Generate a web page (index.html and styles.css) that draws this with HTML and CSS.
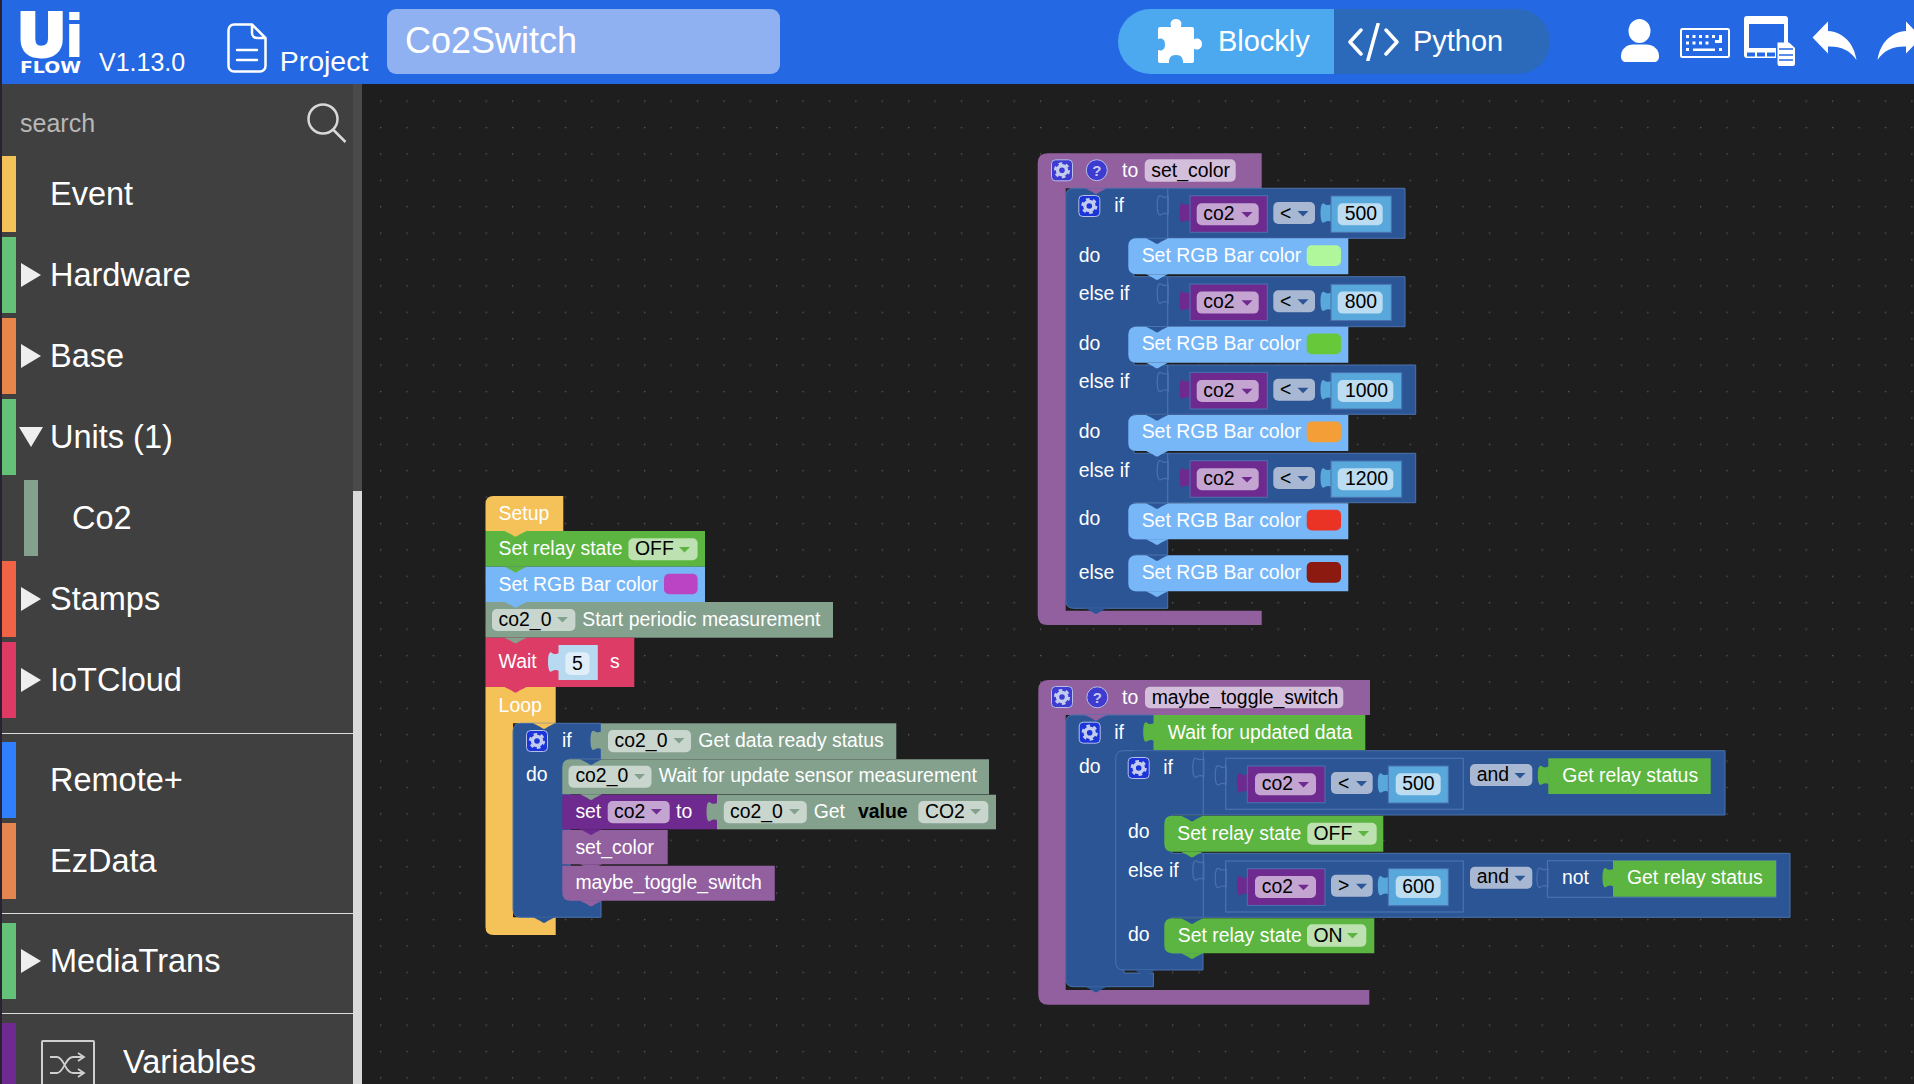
FILE: index.html
```html
<!DOCTYPE html>
<html lang="en">
<head>
    <meta charset="UTF-8">
    <title>UiFlow - Co2Switch</title>
    <link rel="stylesheet" href="styles.css">
</head>
<body>
<div class="app">
    <!-- top bar -->
    <header class="topbar">
        <svg class="logo" viewBox="0 0 62 84" width="62" height="84">
            <text class="logo-ui"><tspan class="logo-u" x="0" y="54.500">U</tspan><tspan class="logo-i" x="46" y="55.500">i</tspan></text>
            <text class="logo-flow" x="0" y="73" textLength="61" lengthAdjust="spacingAndGlyphs">FLOW</text>
        </svg>
        <span class="version">V1.13.0</span>
        <svg class="file-icon" viewBox="0 0 40 50" width="40" height="50">
            <path d="M7 1.5H25L38.5 15V43a5.5 5.5 0 0 1-5.5 5.5H7A5.5 5.5 0 0 1 1.5 43V7A5.5 5.5 0 0 1 7 1.5zM25 2V10a5 5 0 0 0 5 5H38M10 27H30M10 37H30"/>
        </svg>
        <span class="project">Project</span>
        <div class="project-name">Co2Switch</div>
        <div class="mode-switch">
            <div class="mode mode-blockly">
                <svg viewBox="0 0 45 45" width="45" height="45">
                    <path d="M3 8H14V7C13 5 13.5 0 19 0C24.5 0 25 5 24 7V8H35Q37 8 37 10V20C39 19 45 19 45 25C45 31 39 31 37 30V42Q37 44 35 44H26C26 41 26 36 19 36C12 36 12 41 12 44H3Q1 44 1 42V31C3 32 8 32 8 25.5C8 19 3 19 1 20V10Q1 8 3 8Z"/>
                </svg>
                <span>Blockly</span>
            </div>
            <div class="mode mode-python">
                <svg class="code-icon" viewBox="0 0 51 38" width="51" height="38">
                    <path d="M13 7L2 19L13 31M38 7L49 19L38 31M30 1L20 37"/>
                </svg>
                <span>Python</span>
            </div>
        </div>
        <svg class="tool tool-user" viewBox="0 0 38 43" width="38" height="43">
            <ellipse cx="18.5" cy="12" rx="11" ry="12"/>
            <path d="M0 37C0 30 6 25.5 12 25.5H25C32 25.5 38 30 38 37C38 41 36 43 33 43H5C2 43 0 41 0 37Z"/>
        </svg>
        <svg class="tool tool-keys" viewBox="0 0 50 30" width="50" height="30">
            <rect class="key-frame" x="1" y="1" width="48" height="28" rx="1.5"/>
            <path d="M6 7h3v3H6zM12.500 7h3v3h-3zM19 7h3v3h-3zM25.500 7h3v3h-3zM32 7h3v3h-3zM39 7h3v8h-7v-3h4zM6 13.500h3v3H6zM12.500 13.500h3v3h-3zM19 13.500h3v3h-3zM25.500 13.500h3v3h-3zM6 20h3v3H6zM13 20.500h22v2.500H13zM39 20h3v3h-3z"/>
        </svg>
        <svg class="tool tool-device" viewBox="0 0 52 50" width="52" height="50">
            <path fill-rule="evenodd" d="M3 0H41Q44 0 44 3V39Q44 42 41 42H3Q0 42 0 39V3Q0 0 3 0ZM5 8V32H40V8ZM3 36.500V40.500H11V36.500ZM13 36.500V40.500H21V36.500ZM23 36.500V40.500H31V36.500Z"/>
            <path class="doc-gap" d="M32 27H45L52 33V50H32Z"/>
            <path d="M33.500 26.500H45L51 32V48Q51 50 49 50H35.500Q33.500 50 33.500 48Z"/>
            <path class="doc-line" d="M35 33H49M35 39H49M35 44H49"/>
        </svg>
        <svg class="tool tool-undo" viewBox="0 0 45 39" width="45" height="39">
            <path d="M0.500 16.500L16 0.500V10C31 11 42 22 44.500 39C38 29 28 25 16 25.500V32.500Z"/>
        </svg>
        <svg class="tool tool-redo" viewBox="0 0 45 39" width="45" height="39">
            <path d="M44.500 16.500L29 0.500V10C14 11 3 22 0.500 39C7 29 17 25 29 25.500V32.500Z"/>
        </svg>
    </header>

    <div class="main">
        <!-- category list -->
        <aside class="sidebar">
            <div class="search">
                <span>search</span>
                <svg viewBox="0 0 40 40" width="40" height="40">
                    <circle cx="16" cy="16" r="14.500"/>
                    <path d="M26.500 27L38.500 39"/>
                </svg>
            </div>
            <div class="cat"><i class="bar c-event"></i><b class="tri"></b><span>Event</span></div>
            <div class="cat"><i class="bar c-hardware"></i><b class="tri tri-right"></b><span>Hardware</span></div>
            <div class="cat"><i class="bar c-base"></i><b class="tri tri-right"></b><span>Base</span></div>
            <div class="cat"><i class="bar c-hardware"></i><b class="tri tri-down"></b><span>Units (1)</span></div>
            <div class="cat cat-sub"><i class="bar c-co2"></i><span>Co2</span></div>
            <div class="cat"><i class="bar c-stamps"></i><b class="tri tri-right"></b><span>Stamps</span></div>
            <div class="cat"><i class="bar c-iot"></i><b class="tri tri-right"></b><span>IoTCloud</span></div>
            <hr class="sep sep-first">
            <div class="cat"><i class="bar c-remote"></i><b class="tri"></b><span>Remote+</span></div>
            <div class="cat"><i class="bar c-ezdata"></i><b class="tri"></b><span>EzData</span></div>
            <hr class="sep">
            <div class="cat"><i class="bar c-hardware"></i><b class="tri tri-right"></b><span>MediaTrans</span></div>
            <hr class="sep">
            <div class="cat cat-var">
                <i class="bar c-vars"></i>
                <div class="var-icon">
                    <svg viewBox="0 0 36 26" width="36" height="26">
                        <path d="M0 5H7C14 5 15 21 23 21H33M0 21H7C14 21 15 5 23 5H33M28 1L34 5L28 9M28 17L34 21L28 25"/>
                    </svg>
                </div>
                <span>Variables</span>
            </div>
        </aside>
        <div class="scrollbar"><div class="scroll-thumb"></div></div>

        <!-- blockly workspace, coordinates are page pixels -->
        <svg class="workspace" viewBox="362 84 1552 1000" width="1552" height="1000">
            <defs>
                <pattern id="dots" x="380" y="100.500" width="26.400" height="26.400" patternUnits="userSpaceOnUse">
                    <rect width="1.300" height="1.300" fill="#5a5a5a"/>
                </pattern>
                <path id="notch" d="M0 0L7 3.500L10 5.500H12L15 3.500L22 0Z"/>
                <path id="tab" d="M0.500 8C-3 10-5 9-7 7.500C-9.500 6.500-10.500 11-10.500 17C-10.500 23-9.500 27.500-7 26.500C-5 25-3 24 0.500 26Z"/>
                <path id="arr" d="M0 0H11L5.500 5.500Z"/>
                <path id="rgb" d="M1136.300 0H1348.300V36H1136.300Q1128.300 36 1128.300 28V8Q1128.300 0 1136.300 0Z"/>
                <g id="gear">
                    <rect x="0.500" y="0.500" width="21" height="21" rx="4" class="gear-box"/>
                    <circle cx="11" cy="11" r="4.500" class="gear-ring"/>
                    <circle cx="11" cy="11" r="6.800" class="gear-teeth"/>
                </g>
            </defs>
            <rect x="362" y="84" width="1552" height="1000" fill="url(#dots)"/>

            <!-- setup / loop stack -->
            <path class="yellow" d="M485.500 504Q485.500 496 493.500 496H563.300V531H485.500Z"/>
            <text class="t" x="498.600" y="520">Setup</text>

            <rect class="green" x="485.500" y="531" width="219.500" height="35.700"/>
            <text class="t" x="498.600" y="555">Set relay state</text>
            <rect class="f-green" x="628.400" y="538.300" width="69.200" height="22" rx="5"/>
            <text class="k" x="635" y="555">OFF</text>
            <use href="#arr" class="a-green" x="679" y="547"/>

            <rect class="sky" x="485.500" y="566.700" width="219.500" height="35.300"/>
            <text class="t" x="498.600" y="590.700">Set RGB Bar color</text>
            <rect class="sw-magenta" x="664" y="573.700" width="33.600" height="20.600" rx="5"/>

            <rect class="sage" x="485.500" y="602" width="347.500" height="35.700"/>
            <rect class="f-sage" x="492" y="609" width="83.400" height="22" rx="5"/>
            <text class="k" x="498.600" y="626">co2_0</text>
            <use href="#arr" class="a-sage" x="557" y="617"/>
            <text class="t" x="582.300" y="626">Start periodic measurement</text>

            <rect class="pink" x="485.500" y="637.700" width="148.800" height="49.300"/>
            <text class="t" x="498.600" y="668.300">Wait</text>
            <use href="#tab" class="num-shadow" x="558.500" y="645"/>
            <rect class="num-shadow" x="558.500" y="645" width="39.300" height="35"/>
            <rect class="f-num-shadow" x="565.400" y="652.300" width="24.100" height="22.700" rx="5"/>
            <text class="k" x="572" y="669.500">5</text>
            <text class="t" x="610" y="668.300">s</text>

            <path class="yellow" d="M485.500 687H555.700V723.300H513V917.300H555.700V935H493.500Q485.500 935 485.500 927Z"/>
            <text class="t" x="498.600" y="712">Loop</text>

            <path class="blue edge" d="M513 731.300Q513 723.300 521 723.300H601V759H570V900H601V917.300H521Q513 917.300 513 909.300Z"/>
            <use href="#gear" class="gear-if" x="526" y="730"/>
            <text class="t" x="562" y="746.700">if</text>
            <text class="t" x="526" y="781">do</text>

            <use href="#tab" class="sage" x="601" y="723.300"/>
            <rect class="sage" x="601" y="723.300" width="295.300" height="35.700"/>
            <rect class="f-sage" x="608" y="730" width="83" height="22.300" rx="5"/>
            <text class="k" x="614.600" y="746.700">co2_0</text>
            <use href="#arr" class="a-sage" x="673.500" y="738"/>
            <text class="t" x="698.300" y="746.700">Get data ready status</text>

            <path class="sage" d="M570.300 759.300H989V794.300H562.300V767.300Q562.300 759.300 570.300 759.300Z"/>
            <rect class="f-sage" x="568.500" y="765.700" width="83" height="22" rx="5"/>
            <text class="k" x="575.400" y="782.300">co2_0</text>
            <use href="#arr" class="a-sage" x="634" y="774"/>
            <text class="t" x="658.700" y="782.300">Wait for update sensor measurement</text>

            <rect class="var" x="562.300" y="794.700" width="154.700" height="34.600"/>
            <text class="t" x="575.400" y="817.700">set</text>
            <rect class="f-var" x="607.700" y="801" width="62" height="22.300" rx="5"/>
            <text class="k" x="614" y="817.700">co2</text>
            <use href="#arr" class="a-var" x="651" y="809"/>
            <text class="t" x="676" y="817.700">to</text>
            <use href="#tab" class="sage" x="717" y="794.700"/>
            <rect class="sage" x="717" y="794.700" width="279" height="34.600"/>
            <rect class="f-sage" x="723.800" y="801" width="83" height="22.300" rx="5"/>
            <text class="k" x="730" y="817.700">co2_0</text>
            <use href="#arr" class="a-sage" x="789" y="809"/>
            <text class="t" x="813.700" y="817.700">Get</text>
            <text class="k kb" x="858" y="817.700">value</text>
            <rect class="f-sage" x="918.300" y="801" width="70" height="22.300" rx="5"/>
            <text class="k" x="925" y="817.700">CO2</text>
            <use href="#arr" class="a-sage" x="970" y="809"/>

            <rect class="proc" x="562.300" y="830" width="105.400" height="34.300"/>
            <text class="t" x="575.400" y="854">set_color</text>
            <path class="proc" d="M562.300 865.700H774.800V900.700H570.300Q562.300 900.700 562.300 892.700Z"/>
            <text class="t" x="575.400" y="889.300">maybe_toggle_switch</text>

            <use href="#notch" class="yellow" x="504.500" y="531"/>
            <use href="#notch" class="green" x="504.500" y="566.700"/>
            <use href="#notch" class="sky" x="504.500" y="602"/>
            <use href="#notch" class="sage" x="504.500" y="637.700"/>
            <use href="#notch" class="pink" x="504.500" y="687"/>
            <use href="#notch" class="yellow" x="533" y="723.300"/>
            <use href="#notch" class="blue" x="533" y="917.300"/>
            <use href="#notch" class="blue" x="580" y="759.300"/>
            <use href="#notch" class="sage" x="580" y="794.300"/>
            <use href="#notch" class="var" x="580" y="829.300"/>
            <use href="#notch" class="proc" x="580" y="864.300"/>
            <use href="#notch" class="proc" x="580" y="900.700"/>

            <!-- to set_color -->
            <path class="proc" d="M1037.700 163.300Q1037.700 153.300 1047.700 153.300H1261.700V188.300H1065.700V610.700H1261.700V625H1047.700Q1037.700 625 1037.700 615Z"/>
            <use href="#gear" class="gear-fn" x="1051" y="159.300"/>
            <circle class="help" cx="1096.800" cy="170.200" r="10.500"/>
            <text class="help-q" x="1096.800" y="176">?</text>
            <text class="t" x="1122" y="176.700">to</text>
            <rect class="f-proc" x="1144.700" y="159.300" width="91" height="22.400" rx="5"/>
            <text class="k" x="1151.300" y="176.700">set_color</text>

            <path class="blue edge" d="M1065.700 196.300Q1065.700 188.300 1073.700 188.300H1405V238.300H1134V276.700H1405V326.700H1134V365H1415.700V414.300H1134V453.300H1415.700V502.700H1134V539H1167.700V555H1134V591H1167.700V608.300H1073.700Q1065.700 608.300 1065.700 600.300Z"/>
            <path class="edge-line" d="M1167.700 188.300V238.300M1167.700 276.700V326.700M1167.700 365V414.300M1167.700 453.300V502.700"/>
            <use href="#gear" class="gear-if" x="1078.300" y="195"/>
            <text class="t" x="1114.300" y="212">if</text>
            <text class="t" x="1078.700" y="261.700">do</text>
            <text class="t" x="1078.700" y="300">else if</text>
            <text class="t" x="1078.700" y="350">do</text>
            <text class="t" x="1078.700" y="388.300">else if</text>
            <text class="t" x="1078.700" y="437.700">do</text>
            <text class="t" x="1078.700" y="476.700">else if</text>
            <text class="t" x="1078.700" y="525.300">do</text>
            <text class="t" x="1078.700" y="578.700">else</text>

            <use href="#tab" class="sock" x="1167.700" y="188.300"/>
            <use href="#tab" class="var" x="1190" y="195.700"/>
            <rect class="var edge" x="1190" y="195.700" width="77.300" height="36.600"/>
            <rect class="f-var" x="1196.700" y="203.300" width="62" height="22" rx="5"/>
            <text class="k" x="1203.300" y="220">co2</text>
            <use href="#arr" class="a-var" x="1241.500" y="212"/>
            <rect class="f-op" x="1273.300" y="202" width="41.700" height="22" rx="5"/>
            <text class="k" x="1280" y="219.500">&lt;</text>
            <use href="#arr" class="a-op" x="1297.500" y="211"/>
            <use href="#tab" class="num" x="1331" y="196"/>
            <rect class="num edge" x="1331" y="196" width="60.300" height="36.300"/>
            <rect class="f-num" x="1337.700" y="203.300" width="45" height="22" rx="5"/>
            <text class="k" x="1344.700" y="220">500</text>

            <g transform="translate(0 88.300)">
                <use href="#tab" class="sock" x="1167.700" y="188.300"/>
                <use href="#tab" class="var" x="1190" y="195.700"/>
                <rect class="var edge" x="1190" y="195.700" width="77.300" height="36.600"/>
                <rect class="f-var" x="1196.700" y="203.300" width="62" height="22" rx="5"/>
                <text class="k" x="1203.300" y="220">co2</text>
                <use href="#arr" class="a-var" x="1241.500" y="212"/>
                <rect class="f-op" x="1273.300" y="202" width="41.700" height="22" rx="5"/>
                <text class="k" x="1280" y="219.500">&lt;</text>
                <use href="#arr" class="a-op" x="1297.500" y="211"/>
                <use href="#tab" class="num" x="1331" y="196"/>
                <rect class="num edge" x="1331" y="196" width="60.300" height="36.300"/>
                <rect class="f-num" x="1337.700" y="203.300" width="45" height="22" rx="5"/>
                <text class="k" x="1344.700" y="220">800</text>
            </g>
            <g transform="translate(0 176.700)">
                <use href="#tab" class="sock" x="1167.700" y="188.300"/>
                <use href="#tab" class="var" x="1190" y="195.700"/>
                <rect class="var edge" x="1190" y="195.700" width="77.300" height="36.600"/>
                <rect class="f-var" x="1196.700" y="203.300" width="62" height="22" rx="5"/>
                <text class="k" x="1203.300" y="220">co2</text>
                <use href="#arr" class="a-var" x="1241.500" y="212"/>
                <rect class="f-op" x="1273.300" y="202" width="41.700" height="22" rx="5"/>
                <text class="k" x="1280" y="219.500">&lt;</text>
                <use href="#arr" class="a-op" x="1297.500" y="211"/>
                <use href="#tab" class="num" x="1331" y="196"/>
                <rect class="num edge" x="1331" y="196" width="70.700" height="36.300"/>
                <rect class="f-num" x="1337.700" y="203.300" width="55.600" height="22" rx="5"/>
                <text class="k" x="1345" y="220">1000</text>
            </g>
            <g transform="translate(0 265)">
                <use href="#tab" class="sock" x="1167.700" y="188.300"/>
                <use href="#tab" class="var" x="1190" y="195.700"/>
                <rect class="var edge" x="1190" y="195.700" width="77.300" height="36.600"/>
                <rect class="f-var" x="1196.700" y="203.300" width="62" height="22" rx="5"/>
                <text class="k" x="1203.300" y="220">co2</text>
                <use href="#arr" class="a-var" x="1241.500" y="212"/>
                <rect class="f-op" x="1273.300" y="202" width="41.700" height="22" rx="5"/>
                <text class="k" x="1280" y="219.500">&lt;</text>
                <use href="#arr" class="a-op" x="1297.500" y="211"/>
                <use href="#tab" class="num" x="1331" y="196"/>
                <rect class="num edge" x="1331" y="196" width="70.700" height="36.300"/>
                <rect class="f-num" x="1337.700" y="203.300" width="55.600" height="22" rx="5"/>
                <text class="k" x="1345" y="220">1200</text>
            </g>

            <use href="#rgb" class="sky" y="238.300"/>
            <text class="t" x="1141.700" y="261.700">Set RGB Bar color</text>
            <rect class="sw-mint" x="1306.700" y="245.300" width="34.300" height="20.700" rx="5"/>
            <use href="#rgb" class="sky" y="326.700"/>
            <text class="t" x="1141.700" y="350">Set RGB Bar color</text>
            <rect class="sw-green" x="1306.700" y="333.500" width="34.300" height="20.700" rx="5"/>
            <use href="#rgb" class="sky" y="415"/>
            <text class="t" x="1141.700" y="438.300">Set RGB Bar color</text>
            <rect class="sw-orange" x="1306.700" y="421.500" width="34.300" height="20.700" rx="5"/>
            <use href="#rgb" class="sky" y="503.300"/>
            <text class="t" x="1141.700" y="526.700">Set RGB Bar color</text>
            <rect class="sw-red" x="1306.700" y="509.800" width="34.300" height="20.700" rx="5"/>
            <use href="#rgb" class="sky" y="555.300"/>
            <text class="t" x="1141.700" y="578.700">Set RGB Bar color</text>
            <rect class="sw-maroon" x="1306.700" y="562" width="34.300" height="20.700" rx="5"/>

            <use href="#notch" class="proc" x="1085" y="188.300"/>
            <use href="#notch" class="blue" x="1085" y="608.300"/>
            <use href="#notch" class="blue" x="1146" y="238.300"/>
            <use href="#notch" class="sky" x="1146" y="274.300"/>
            <use href="#notch" class="blue" x="1146" y="326.700"/>
            <use href="#notch" class="sky" x="1146" y="362.700"/>
            <use href="#notch" class="blue" x="1146" y="415"/>
            <use href="#notch" class="sky" x="1146" y="451"/>
            <use href="#notch" class="blue" x="1146" y="503.300"/>
            <use href="#notch" class="sky" x="1146" y="539.300"/>
            <use href="#notch" class="blue" x="1146" y="555.300"/>
            <use href="#notch" class="sky" x="1146" y="591.300"/>

            <!-- to maybe_toggle_switch -->
            <path class="proc" d="M1038.300 690Q1038.300 680 1048.300 680H1370V715H1065.700V990H1369.300V1004.700H1048.300Q1038.300 1004.700 1038.300 994.700Z"/>
            <use href="#gear" class="gear-fn" x="1051" y="686"/>
            <circle class="help" cx="1097.300" cy="697.300" r="10.500"/>
            <text class="help-q" x="1097.300" y="703">?</text>
            <text class="t" x="1122" y="704.300">to</text>
            <rect class="f-proc" x="1145" y="686.700" width="198.300" height="21.600" rx="5"/>
            <text class="k" x="1151.700" y="704.300">maybe_toggle_switch</text>

            <path class="blue edge" d="M1065.700 723Q1065.700 715 1073.700 715H1153.700V750.700H1124V973H1153.400V986.700H1073.700Q1065.700 986.700 1065.700 978.700Z"/>
            <use href="#gear" class="gear-if" x="1078.700" y="721.700"/>
            <text class="t" x="1114.300" y="739.300">if</text>
            <text class="t" x="1079" y="772.700">do</text>

            <use href="#tab" class="green" x="1153.700" y="715"/>
            <rect class="green" x="1153.700" y="715" width="211.600" height="35"/>
            <text class="t" x="1167.700" y="739.300">Wait for updated data</text>

            <path class="blue edge" d="M1115.700 758.700Q1115.700 750.700 1123.700 750.700H1725V815H1172V853.300H1790V917.300H1172V953.300H1203V970H1123.700Q1115.700 970 1115.700 962Z"/>
            <path class="edge-line" d="M1203.300 750.700V815M1203.300 853.300V917.300"/>
            <use href="#gear" class="gear-if" x="1127.700" y="757"/>
            <text class="t" x="1163.300" y="774.300">if</text>
            <text class="t" x="1128" y="838">do</text>
            <text class="t" x="1128" y="877">else if</text>
            <text class="t" x="1128" y="941.300">do</text>

            <use href="#tab" class="sock" x="1203.300" y="750.700"/>
            <use href="#tab" class="sock" x="1225.700" y="758.300"/>
            <rect class="outline" x="1225.700" y="758.300" width="237.600" height="51"/>
            <use href="#tab" class="var" x="1247.300" y="766"/>
            <rect class="var edge" x="1247.300" y="766" width="77.700" height="36.700"/>
            <rect class="f-var" x="1255" y="773.300" width="61" height="22" rx="5"/>
            <text class="k" x="1261.700" y="790">co2</text>
            <use href="#arr" class="a-var" x="1298" y="782"/>
            <rect class="f-op" x="1331" y="772" width="41.700" height="22" rx="5"/>
            <text class="k" x="1338" y="789.500">&lt;</text>
            <use href="#arr" class="a-op" x="1356" y="781"/>
            <use href="#tab" class="num" x="1388.300" y="766"/>
            <rect class="num edge" x="1388.300" y="766" width="60" height="37"/>
            <rect class="f-num" x="1395.700" y="773.300" width="45" height="22" rx="5"/>
            <text class="k" x="1402.300" y="790">500</text>
            <rect class="f-op" x="1470" y="764" width="62.300" height="22" rx="5"/>
            <text class="k" x="1476.700" y="780.700">and</text>
            <use href="#arr" class="a-op" x="1514.500" y="773"/>
            <use href="#tab" class="green" x="1548.300" y="758.300"/>
            <rect class="green" x="1548.300" y="758.300" width="162.400" height="35.700"/>
            <text class="t" x="1562.300" y="781.700">Get relay status</text>

            <g transform="translate(0 102.700)">
                <use href="#tab" class="sock" x="1203.300" y="750.700"/>
                <use href="#tab" class="sock" x="1225.700" y="758.300"/>
                <rect class="outline" x="1225.700" y="758.300" width="237.600" height="51"/>
                <use href="#tab" class="var" x="1247.300" y="766"/>
                <rect class="var edge" x="1247.300" y="766" width="77.700" height="36.700"/>
                <rect class="f-var" x="1255" y="773.300" width="61" height="22" rx="5"/>
                <text class="k" x="1261.700" y="790">co2</text>
                <use href="#arr" class="a-var" x="1298" y="782"/>
                <rect class="f-op" x="1331" y="772" width="41.700" height="22" rx="5"/>
                <text class="k" x="1338" y="789.500">&gt;</text>
                <use href="#arr" class="a-op" x="1356" y="781"/>
                <use href="#tab" class="num" x="1388.300" y="766"/>
                <rect class="num edge" x="1388.300" y="766" width="60" height="37"/>
                <rect class="f-num" x="1395.700" y="773.300" width="45" height="22" rx="5"/>
                <text class="k" x="1402.300" y="790">600</text>
                <rect class="f-op" x="1470" y="764" width="62.300" height="22" rx="5"/>
                <text class="k" x="1476.700" y="780.700">and</text>
                <use href="#arr" class="a-op" x="1514.500" y="773"/>
            </g>
            <use href="#tab" class="sock" x="1547.400" y="860.700"/>
            <rect class="outline" x="1547.400" y="860.700" width="228.600" height="36.600"/>
            <text class="t" x="1562" y="884">not</text>
            <use href="#tab" class="green" x="1613" y="860.700"/>
            <rect class="green" x="1613" y="860.700" width="163" height="36"/>
            <text class="t" x="1627" y="884">Get relay status</text>

            <path class="green" d="M1172.300 815.700H1383.300V851.700H1172.300Q1164.300 851.700 1164.300 843.700V823.700Q1164.300 815.700 1172.300 815.700Z"/>
            <text class="t" x="1177.300" y="839.700">Set relay state</text>
            <rect class="f-green" x="1307.300" y="822.700" width="69.400" height="22" rx="5"/>
            <text class="k" x="1313.500" y="839.700">OFF</text>
            <use href="#arr" class="a-green" x="1358" y="831"/>
            <path class="green" d="M1172.300 918.300H1374.300V953.300H1172.300Q1164.300 953.300 1164.300 945.300V926.300Q1164.300 918.300 1172.300 918.300Z"/>
            <text class="t" x="1177.800" y="941.700">Set relay state</text>
            <rect class="f-green" x="1307" y="924.300" width="59.300" height="22.400" rx="5"/>
            <text class="k" x="1313.500" y="941.700">ON</text>
            <use href="#arr" class="a-green" x="1347" y="933"/>

            <use href="#notch" class="proc" x="1085" y="715"/>
            <use href="#notch" class="blue" x="1085" y="986.700"/>
            <use href="#notch" class="blue" x="1133" y="750.700"/>
            <use href="#notch" class="blue" x="1134" y="970"/>
            <use href="#notch" class="blue" x="1181" y="815.700"/>
            <use href="#notch" class="green" x="1181" y="851.700"/>
            <use href="#notch" class="blue" x="1181" y="918.300"/>
            <use href="#notch" class="green" x="1181" y="953.300"/>
        </svg>
    </div>
</div>
</body>
</html>
```

FILE: styles.css
```css
html, body {
    margin: 0;
    padding: 0;
    overflow: hidden;
    background: #2a2233;
    width: 1914px;
    height: 1084px;
    font-family: "Liberation Sans", Arial, sans-serif;
}

.app {
    margin-left: 2px;
    height: 1084px;
    display: flex;
    flex-direction: column;
}

/* top bar */
.topbar {
    height: 84px;
    flex: none;
    display: flex;
    align-items: flex-start;
    background: #2468e3;
    color: white;
    overflow: hidden;
}

.logo {
    margin: 0 0 0 18px;
    flex: none;
}

.logo-ui {
    font: bold 60px "Liberation Sans", Arial, sans-serif;
    fill: white;
    stroke: white;
}

.logo-u { stroke-width: 6px; }
.logo-i { stroke-width: 2px; }

.logo-flow {
    font: bold 16px "DejaVu Sans", sans-serif;
    fill: white;
}

.version {
    margin: 47px 0 0 17px;
    font-size: 25px;
    line-height: 30px;
    white-space: nowrap;
}

.file-icon {
    margin: 23px 0 0 42px;
    flex: none;
}

.file-icon path {
    fill: none;
    stroke: white;
    stroke-width: 2.5px;
    stroke-linejoin: round;
    stroke-linecap: round;
}

.project {
    margin: 43px 0 0 12.500px;
    font-size: 28.5px;
    line-height: 36px;
}

.project-name {
    margin: 9px 0 0 18.500px;
    width: 375px;
    height: 65px;
    padding-left: 18px;
    border-radius: 9px;
    background: #8fb1f1;
    font-size: 36px;
    line-height: 63px;
    flex: none;
}

.mode-switch {
    margin: 9px 0 0 338px;
    width: 432px;
    height: 65px;
    display: flex;
    border-radius: 33px;
    overflow: hidden;
    flex: none;
}

.mode {
    width: 216px;
    box-sizing: border-box;
    display: flex;
    align-items: center;
    font-size: 29px;
}

.mode svg {
    flex: none;
}

.mode svg path {
    fill: white;
}

.mode-blockly {
    background: #4ca9f0;
    padding-left: 39px;
    gap: 16px;
}

.mode-python {
    background: #2b69bb;
    padding-left: 14px;
    gap: 14px;
}

.mode svg.code-icon path {
    fill: none;
    stroke: white;
    stroke-width: 3.5px;
    stroke-linecap: round;
    stroke-linejoin: round;
}

.tool {
    flex: none;
    fill: white;
}

.tool-user { margin: 19px 0 0 71px; }
.tool-keys { margin: 28px 0 0 21px; }
.tool-device { margin: 16px 0 0 14px; }
.tool-undo { margin: 21px 0 0 16px; }
.tool-redo { margin: 21px 0 0 20px; }

.key-frame {
    fill: none;
    stroke: white;
    stroke-width: 2px;
}

.doc-gap { fill: #2468e3; }

.doc-line {
    fill: none;
    stroke: #2468e3;
    stroke-width: 1.5px;
}

.main {
    flex: 1;
    display: flex;
    min-height: 0;
}

/* categories */
.sidebar {
    width: 351px;
    flex: none;
    background: #404040;
    color: white;
    font-size: 32.5px;
    overflow: hidden;
}

.search {
    height: 72px;
    box-sizing: border-box;
    display: flex;
    align-items: center;
    justify-content: space-between;
    padding: 6px 6px 0 18px;
    color: #b8b8b8;
    font-size: 25px;
}

.search svg {
    fill: none;
    stroke: #d8d8d8;
    stroke-width: 2.5px;
}

.cat {
    height: 76px;
    margin-bottom: 5px;
    display: flex;
    align-items: center;
}

.bar {
    width: 14px;
    height: 76px;
    flex: none;
}

.tri {
    width: 34px;
    height: 24px;
    flex: none;
    position: relative;
}

.tri-right::before {
    content: "";
    position: absolute;
    left: 5px;
    top: 0;
    border-left: 20px solid #eee;
    border-top: 12px solid transparent;
    border-bottom: 12px solid transparent;
}

.tri-down::before {
    content: "";
    position: absolute;
    left: 3px;
    top: 2px;
    border-top: 20px solid #eee;
    border-left: 12px solid transparent;
    border-right: 12px solid transparent;
}

.cat-sub .bar { margin: 0 34px 0 22px; }

.cat-var .bar { margin-right: 25px; }

.cat-var span { margin: 2px 0 0 28px; }

.var-icon {
    width: 50px;
    height: 52px;
    margin-top: 24px;
    flex: none;
    border: 2px solid #cfcfcf;
    border-radius: 2px;
    display: flex;
    justify-content: center;
    padding-top: 10px;
}

.var-icon svg {
    fill: none;
    stroke: #cfcfcf;
    stroke-width: 1.8px;
}

.sep {
    margin: 14px 0 9px;
    border: 0;
    height: 1px;
    background: #dcdcdc;
}

.sep-first { margin: 15px 0 8px; }

.c-event { background: #f5c25a; }
.c-hardware { background: #65c177; }
.c-base { background: #e88549; }
.c-co2 { background: #84a18e; }
.c-stamps { background: #f06445; }
.c-iot { background: #de3a64; }
.c-remote { background: #2f7fff; }
.c-ezdata { background: #e58650; }
.c-vars { background: #6f2a92; }

.scrollbar {
    width: 9px;
    flex: none;
    background: #d9d9d9;
}

.scroll-thumb {
    height: 407px;
    background: #4a4a4a;
}

/* workspace */
.workspace {
    display: block;
    flex: none;
    background: #1e1e1e;
}

.workspace text {
    font-family: "Liberation Sans", Arial, sans-serif;
    font-size: 19.4px;
}

.t { fill: white; }
.k { fill: black; }
.workspace .kb { font-weight: bold; }

.yellow { fill: #f5c25a; }
.green { fill: #5cb541; }
.sky { fill: #78b7f7; }
.sage { fill: #84a18e; }
.pink { fill: #dd3c66; }
.blue { fill: #2c5596; }
.var { fill: #6e2a8e; }
.proc { fill: #925f9f; }
.num { fill: #58a8dc; }
.num-shadow { fill: #b7daf0; }

.edge {
    stroke: #4a72ad;
    stroke-width: 1px;
}

.edge-line,
.outline {
    fill: none;
    stroke: #4a72ad;
    stroke-width: 1.2px;
}

.sock {
    fill: none;
    stroke: #4a72ad;
    stroke-width: 1.2px;
}

.f-green { fill: #bde1b0; }
.f-sage { fill: #c9d6cd; }
.f-var { fill: #c4a5d2; }
.f-op { fill: #a9b8d2; }
.f-num { fill: #bcdcf1; }
.f-num-shadow { fill: #dfeef8; }
.f-proc { fill: #d3bedc; }

.a-green { fill: #5cb541; }
.a-sage { fill: #84a18e; }
.a-var { fill: #6e2a8e; }
.a-op { fill: #2c5596; }

.sw-magenta { fill: #bb44c4; }
.sw-mint { fill: #b0f79b; }
.sw-green { fill: #67c93a; }
.sw-orange { fill: #f49e38; }
.sw-red { fill: #ea3324; }
.sw-maroon { fill: #8c1a11; }

.gear-if { fill: #1a35d8; }
.gear-fn { fill: #3d3bd0; }

.gear-box {
    stroke: #b7bfe8;
    stroke-width: 1px;
}

.gear-ring {
    fill: none;
    stroke: #c3cbee;
    stroke-width: 3.4px;
}

.gear-teeth {
    fill: none;
    stroke: #c3cbee;
    stroke-width: 2.6px;
    stroke-dasharray: 3.6 3.52;
}

.help {
    fill: #3d3bd0;
    stroke: #b7bfe8;
    stroke-width: 1px;
}

.workspace .help-q {
    fill: #c3cbee;
    font-size: 15px;
    font-weight: bold;
    text-anchor: middle;
}
```
